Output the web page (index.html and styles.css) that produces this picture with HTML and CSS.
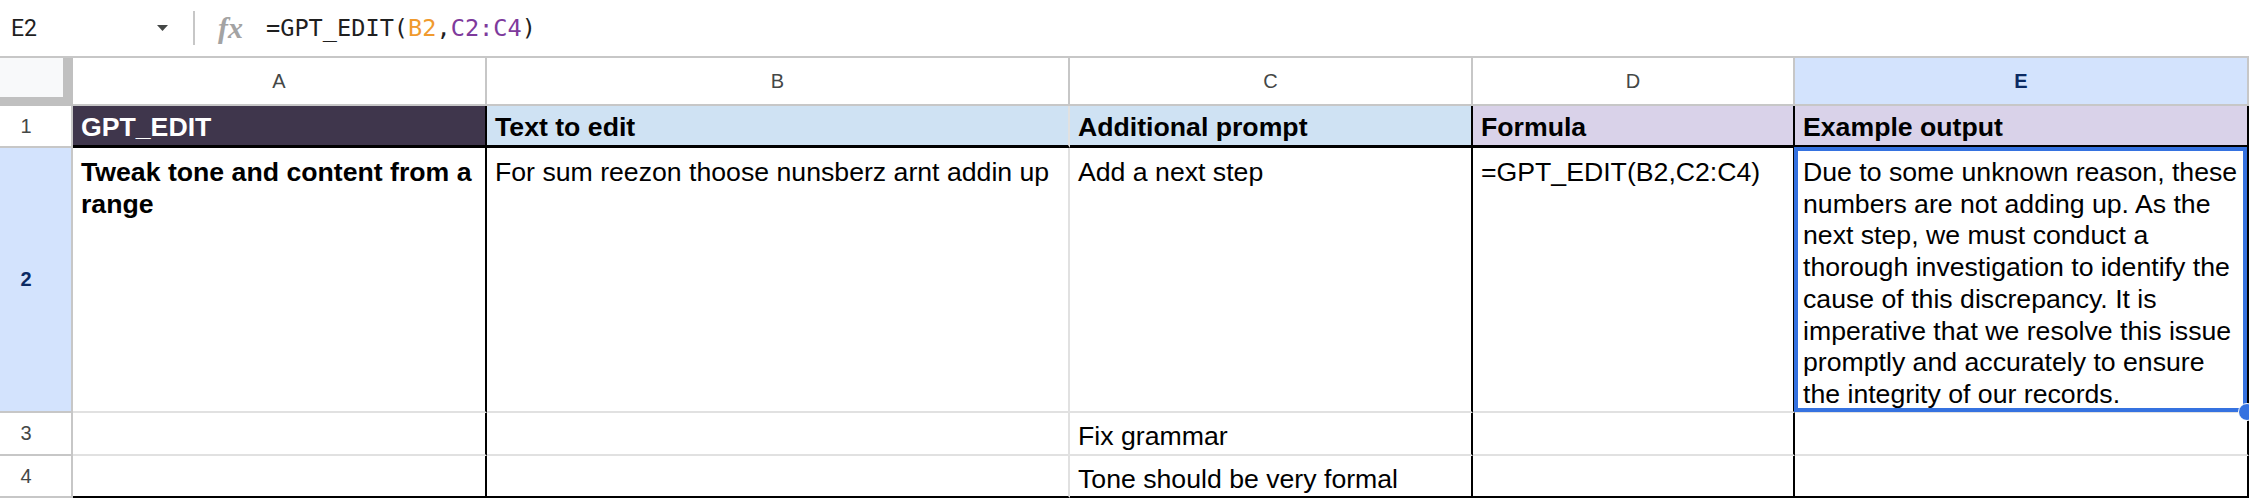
FILE: index.html
```html
<!DOCTYPE html>
<html lang="en">
<head>
  <meta charset="UTF-8" />
  <title>GPT_EDIT - Sheet</title>
  <link rel="stylesheet" href="styles.css">
</head>
<body>
  <div class="formula-bar">
    <div class="name-box">
      <span>E2</span>
      <svg class="caret" width="11" height="6" viewBox="0 0 11 6"><path d="M0 0h11L5.5 6z" fill="#444746"/></svg>
    </div>
    <div class="divider"></div>
    <span class="fx">fx</span>
    <div class="formula">=GPT_EDIT(<span class="ref-b">B2</span>,<span class="ref-c">C2:C4</span>)</div>
  </div>

  <div class="sheet">
    <!-- column headers -->
    <div class="corner"></div>
    <div class="col-head">A</div>
    <div class="col-head">B</div>
    <div class="col-head">C</div>
    <div class="col-head">D</div>
    <div class="col-head active">E</div>

    <!-- row 1 -->
    <div class="row-head">1</div>
    <div class="cell head title edge">GPT_EDIT</div>
    <div class="cell head blue">Text to edit</div>
    <div class="cell head blue edge">Additional prompt</div>
    <div class="cell head purple edge">Formula</div>
    <div class="cell head purple edge">Example output</div>

    <!-- row 2 -->
    <div class="row-head active">2</div>
    <div class="cell tall bold edge">Tweak tone and content from a range</div>
    <div class="cell tall">For sum reezon thoose nunsberz arnt addin up</div>
    <div class="cell tall edge">Add a next step</div>
    <div class="cell tall edge">=GPT_EDIT(B2,C2:C4)</div>
    <div class="cell tall edge selected">Due to some unknown reason, these<br>numbers are not adding up. As the<br>next step, we must conduct a<br>thorough investigation to identify the<br>cause of this discrepancy. It is<br>imperative that we resolve this issue<br>promptly and accurately to ensure<br>the integrity of our records.</div>

    <!-- row 3 -->
    <div class="row-head">3</div>
    <div class="cell edge"></div>
    <div class="cell"></div>
    <div class="cell edge">Fix grammar</div>
    <div class="cell edge"></div>
    <div class="cell edge"></div>

    <!-- row 4 -->
    <div class="row-head">4</div>
    <div class="cell last edge"></div>
    <div class="cell last"></div>
    <div class="cell last edge">Tone should be very formal</div>
    <div class="cell last edge"></div>
    <div class="cell last edge"></div>
  </div>
</body>
</html>
```

FILE: styles.css
```css
* {
  box-sizing: border-box;
}

body {
  margin: 0;
  background-color: #fff;
  color: #000;
  font-family: "Liberation Sans", Arial, sans-serif;
  overflow: hidden;
}

/* formula bar */
.formula-bar {
  display: flex;
  align-items: center;
  height: 58px;
  border-bottom: 2px solid #c7c7c7;
}

.name-box {
  width: 185px;
  display: flex;
  align-items: center;
  justify-content: space-between;
  padding: 0 17px 0 11px;
  font-family: Roboto, sans-serif;
  font-size: 23px;
  color: #1f1f1f;
}

.divider {
  width: 2px;
  height: 34px;
  margin-left: 8px;
  background-color: #c7c7c7;
}

.fx {
  width: 27px;
  margin-left: 23px;
  font-family: "Liberation Serif", serif;
  font-style: italic;
  font-weight: bold;
  font-size: 30px;
  color: #a3a3a3;
}

.formula {
  margin-left: 21px;
  font-family: "DejaVu Sans Mono", monospace;
  font-size: 23.6px;
  color: #1f1f1f;
}

.ref-b {
  color: #f09a2e;
}

.ref-c {
  color: #7e3a9c;
}

/* grid */
.sheet {
  display: grid;
  grid-template-columns: 73px 414px 583px 403px 322px 454px;
  grid-template-rows: 48px 42px 265px 43px 42px;
}

.corner {
  background-color: #f8f9fa;
  border-right: 10px solid #c0c0c0;
  border-bottom: 9px solid #c0c0c0;
}

.col-head {
  display: flex;
  align-items: center;
  justify-content: center;
  border-right: 2px solid #c7c7c7;
  border-bottom: 2px solid #c7c7c7;
  font-size: 20px;
  color: #444746;
}

.row-head {
  display: flex;
  align-items: center;
  justify-content: center;
  padding-right: 19px;
  border-right: 2px solid #c7c7c7;
  border-bottom: 2px solid #c7c7c7;
  font-size: 20px;
  color: #444746;
}

.col-head.active,
.row-head.active {
  background-color: #d3e3fd;
  color: #0b2a63;
  font-weight: bold;
}

.cell {
  padding: 8px 8px 0 8px;
  border-right: 2px solid #e1e1e1;
  border-bottom: 2px solid #e1e1e1;
  font-size: 26.67px;
  line-height: 31.7px;
}

.cell.head {
  padding-top: 6px;
  border-bottom: 3px solid #000;
  font-weight: bold;
}

.cell.tall {
  padding-top: 9px;
}

.cell.edge {
  border-right-color: #000;
}

.cell.last {
  border-bottom-color: #000;
}

.bold {
  font-weight: bold;
}

.title {
  background-color: #3f364c;
  color: #fff;
}

.blue {
  background-color: #cfe2f3;
}

.purple {
  background-color: #d9d2e9;
}

/* active cell outline + fill handle */
.selected {
  position: relative;
}

.selected::after {
  content: "";
  position: absolute;
  top: -1px;
  left: -1px;
  right: 0;
  bottom: -1px;
  border: 4px solid #3572e0;
}

.selected::before {
  content: "";
  position: absolute;
  right: -9px;
  bottom: -10px;
  width: 16px;
  height: 16px;
  border-radius: 50%;
  background-color: #3572e0;
  border: 1px solid #fff;
  z-index: 1;
}
```
